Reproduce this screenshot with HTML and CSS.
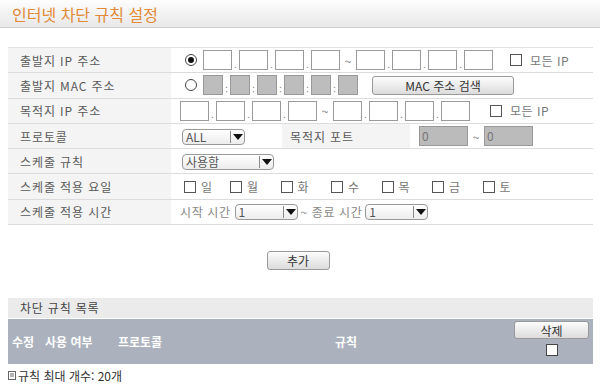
FILE: index.html
```html
<!DOCTYPE html>
<html lang="ko">
<head>
<meta charset="utf-8">
<link rel="stylesheet" href="styles.css">
</head>
<body>
<div class="title">인터넷 차단 규칙 설정</div>
<table class="form">
  <tr>
    <th>출발지 IP 주소</th>
    <td colspan="3">
      <div class="line">
        <span class="radio on"></span>
        <span class="box"></span><span class="sep">.</span><span class="box"></span><span class="sep">.</span><span class="box"></span><span class="sep">.</span><span class="box"></span>
        <span class="tilde">~</span>
        <span class="box"></span><span class="sep">.</span><span class="box"></span><span class="sep">.</span><span class="box"></span><span class="sep">.</span><span class="box"></span>
        <span class="check ml-all"></span><span class="lbl">모든 IP</span>
      </div>
    </td>
  </tr>
  <tr>
    <th>출발지 MAC 주소</th>
    <td colspan="3">
      <div class="line">
        <span class="radio"></span>
        <span class="mac"></span><span class="sep">:</span><span class="mac"></span><span class="sep">:</span><span class="mac"></span><span class="sep">:</span><span class="mac"></span><span class="sep">:</span><span class="mac"></span><span class="sep">:</span><span class="mac"></span>
        <span class="btn btn-mac">MAC 주소 검색</span>
      </div>
    </td>
  </tr>
  <tr>
    <th>목적지 IP 주소</th>
    <td colspan="3">
      <div class="line">
        <span class="box"></span><span class="sep">.</span><span class="box"></span><span class="sep">.</span><span class="box"></span><span class="sep">.</span><span class="box"></span>
        <span class="tilde">~</span>
        <span class="box"></span><span class="sep">.</span><span class="box"></span><span class="sep">.</span><span class="box"></span><span class="sep">.</span><span class="box"></span>
        <span class="check ml-all2"></span><span class="lbl">모든 IP</span>
      </div>
    </td>
  </tr>
  <tr>
    <th>프로토콜</th>
    <td class="proto">
      <span class="sel sel-all"><span class="sel-text">ALL</span><span class="sel-arrow"></span></span>
    </td>
    <th class="sub">목적지 포트</th>
    <td>
      <div class="line">
        <span class="port">0</span><span class="tilde">~</span><span class="port">0</span>
      </div>
    </td>
  </tr>
  <tr>
    <th>스케줄 규칙</th>
    <td colspan="3">
      <span class="sel sel-use"><span class="sel-text">사용함</span><span class="sel-arrow"></span></span>
    </td>
  </tr>
  <tr>
    <th>스케줄 적용 요일</th>
    <td colspan="3">
      <div class="line days">
        <span class="day"><span class="check"></span>일</span>
        <span class="day"><span class="check"></span>월</span>
        <span class="day"><span class="check"></span>화</span>
        <span class="day"><span class="check"></span>수</span>
        <span class="day"><span class="check"></span>목</span>
        <span class="day"><span class="check"></span>금</span>
        <span class="day"><span class="check"></span>토</span>
      </div>
    </td>
  </tr>
  <tr>
    <th>스케줄 적용 시간</th>
    <td colspan="3">
      <div class="line time">
        <span class="txt">시작 시간</span>
        <span class="sel sel-time"><span class="sel-text">1</span><span class="sel-arrow"></span></span>
        <span class="txt">~ 종료 시간</span>
        <span class="sel sel-time"><span class="sel-text">1</span><span class="sel-arrow"></span></span>
      </div>
    </td>
  </tr>
</table>
<div class="actions"><span class="btn btn-add">추가</span></div>
<div class="list-title">차단 규칙 목록</div>
<div class="list-head">
  <span class="h-edit">수정</span>
  <span class="h-use">사용 여부</span>
  <span class="h-proto">프로토콜</span>
  <span class="h-rule">규칙</span>
  <span class="h-del">
    <span class="btn btn-del">삭제</span>
    <span class="check white"></span>
  </span>
</div>
<div class="foot">
  <svg class="foot-icon" width="8" height="9" viewBox="0 0 8 9"><rect x="0.5" y="0.5" width="7" height="8" fill="#fff" stroke="#666"/><line x1="2" y1="3" x2="6" y2="3" stroke="#666"/><line x1="2" y1="5" x2="6" y2="5" stroke="#666"/></svg>
  <span>규칙 최대 개수: 20개</span>
</div>
</body>
</html>
```
FILE: styles.css
```css
* { box-sizing: border-box; }
body {
  margin: 0;
  background: #fff;
  font-family: "Noto Sans CJK KR", "Liberation Sans", sans-serif;
  font-size: 12px;
  color: #555;
}
.title {
  height: 28px;
  padding-left: 12px;
  line-height: 28px;
  font-size: 16px;
  color: #e28a36;
  background: linear-gradient(#fdfdfd, #e8e8e8);
  border-bottom: 1px solid #cfcfcf;
}
.form {
  margin: 19px 0 0 8px;
  width: 585px;
  border-collapse: collapse;
  border-top: 1px solid #e2e2e2;
}
.form tr { height: 25.3px; border-bottom: 1px solid #dcdcdc; }
.form th {
  width: 163px;
  background: #f4f4f4;
  text-align: left;
  font-weight: normal;
  padding: 0 0 0 12px;
  color: #5a5a5a;
  white-space: nowrap;
  letter-spacing: 0.9px;
}
.form th.sub { width: 128px; padding-left: 8px; }
.form td { padding: 0 0 0 9px; background: #fff; }
.form td.proto { width: 111px; }
.line { display: flex; align-items: center; }
.radio {
  width: 12px; height: 12px;
  border: 1px solid #444;
  border-radius: 50%;
  margin: 0 6px 0 5px;
  display: inline-flex; align-items: center; justify-content: center;
  background: #fff;
}
.radio.on::after { content: ""; width: 6px; height: 6px; border-radius: 50%; background: #111; }
.box { width: 29px; height: 20px; border: 1px solid #9a9a9a; background: #fff; }
.sep { width: 7px; text-align: center; color: #888; font-size: 9px; padding-top: 8px; }
.tilde { width: 16px; text-align: center; color: #777; }
.mac { width: 20px; height: 20px; border: 1px solid #999; background: #bdbdbd; }
.check {
  display: inline-block;
  width: 12px; height: 12px;
  border: 1.5px solid #555;
  background: #fff;
}
.ml-all { margin-left: 17px; }
.ml-all2 { margin-left: 20px; }
.lbl { margin-left: 8px; color: #777; letter-spacing: 0.5px; }
.btn {
  display: inline-flex; align-items: center; justify-content: center;
  border: 1px solid #9a9a9a;
  border-radius: 3px;
  background: linear-gradient(#fcfcfc, #dcdcdc);
  color: #333;
  font-size: 12px;
}
.btn-mac { width: 142px; height: 19px; margin-left: 14px; }
.sel {
  display: inline-flex; align-items: center;
  height: 16px;
  border: 1px solid #999;
  border-radius: 4px;
  background: linear-gradient(#fff, #ececec);
  color: #555;
}
.sel-text { flex: 1; padding-left: 3px; font-size: 12px; line-height: 14px; }
.sel-arrow {
  width: 14px; height: 12px;
  border-left: 1px solid #888;
  position: relative;
}
.sel-arrow::after {
  content: "";
  position: absolute; left: 2px; top: 3px;
  border-left: 5px solid transparent;
  border-right: 5px solid transparent;
  border-top: 6px solid #111;
}
.sel-all { width: 63px; margin-left: 2px; }
.sel-use { width: 92px; margin-left: 2px; }
.sel-time { width: 63px; margin: 0 3px 0 4px; }
.sel-time:last-child { margin-left: 3px; }
.port {
  width: 49px; height: 20px;
  border: 1px solid #999; background: #bbb;
  color: #777; padding-left: 2px; line-height: 18px;
}
.day { display: inline-flex; align-items: center; width: 50.5px; color: #777; }
.day:first-child { width: 46px; }
.day .check { margin: 0 5px 0 4px; }
.time .txt { color: #888; letter-spacing: 0.6px; }
.actions { display: flex; justify-content: center; padding: 26px 0 0 0; margin-left: -4px; }
.btn-add { width: 63px; height: 19px; }
.list-title {
  margin: 28px 0 0 8px;
  width: 585px;
  height: 20px;
  background: #ebebeb;
  line-height: 20px;
  padding-left: 12px;
  color: #444;
  letter-spacing: 0.8px;
}
.list-head {
  margin: 1px 0 0 8px;
  width: 585px;
  height: 45px;
  background: #abb2bd;
  display: flex; align-items: center;
  color: #fff;
  font-weight: bold;
  position: relative;
}
.list-head > span { position: absolute; }
.h-edit { left: 4px; }
.h-use { left: 37px; }
.h-proto { left: 110px; }
.h-rule { left: 327px; }
.h-del {
  left: 506px; top: 2px;
  display: flex; flex-direction: column; align-items: center; gap: 5px;
}
.btn-del { width: 75px; height: 18px; font-weight: normal; }
.check.white { border-color: #444; width: 12px; height: 12px; }
.foot {
  display: flex; align-items: center;
  margin: 4px 0 0 8px;
  line-height: 15px;
  color: #333;
  gap: 2px;
}
```
